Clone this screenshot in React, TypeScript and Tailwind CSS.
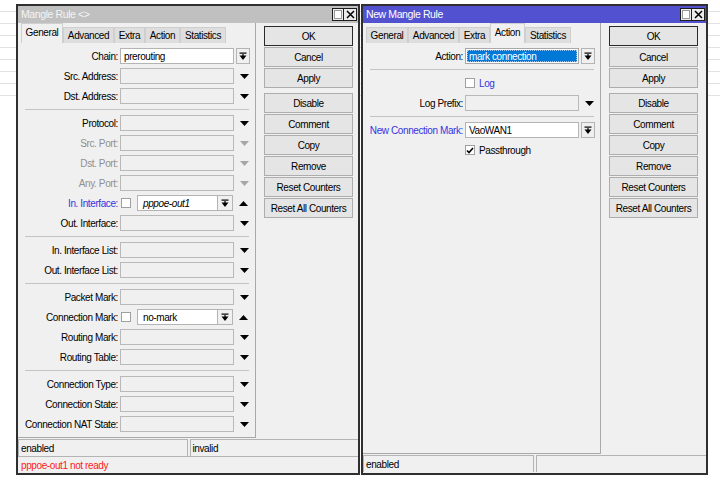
import React from "react";

type Row =
  | { kind: "sep" }
  | { kind: "drop"; label: string; disabled?: boolean }
  | { kind: "combo"; label: string; value: string; blue?: boolean }
  | { kind: "negCombo"; label: string; value: string; blue?: boolean; italic?: boolean }
  | { kind: "select"; label: string; value: string }
  | { kind: "check"; text: string; checked?: boolean; blue?: boolean };

const generalRows: Row[] = [
  { kind: "combo", label: "Chain", value: "prerouting" },
  { kind: "drop", label: "Src. Address" },
  { kind: "drop", label: "Dst. Address" },
  { kind: "sep" },
  { kind: "drop", label: "Protocol" },
  { kind: "drop", label: "Src. Port", disabled: true },
  { kind: "drop", label: "Dst. Port", disabled: true },
  { kind: "drop", label: "Any. Port", disabled: true },
  { kind: "negCombo", label: "In. Interface", value: "pppoe-out1", blue: true, italic: true },
  { kind: "drop", label: "Out. Interface" },
  { kind: "sep" },
  { kind: "drop", label: "In. Interface List" },
  { kind: "drop", label: "Out. Interface List" },
  { kind: "sep" },
  { kind: "drop", label: "Packet Mark" },
  { kind: "negCombo", label: "Connection Mark", value: "no-mark" },
  { kind: "drop", label: "Routing Mark" },
  { kind: "drop", label: "Routing Table" },
  { kind: "sep" },
  { kind: "drop", label: "Connection Type" },
  { kind: "drop", label: "Connection State" },
  { kind: "drop", label: "Connection NAT State" },
];

const actionRows: Row[] = [
  { kind: "select", label: "Action", value: "mark connection" },
  { kind: "sep" },
  { kind: "check", text: "Log", blue: true },
  { kind: "drop", label: "Log Prefix" },
  { kind: "sep" },
  { kind: "combo", label: "New Connection Mark", value: "VaoWAN1", blue: true },
  { kind: "check", text: "Passthrough", checked: true },
];

const tabs = [
  { name: "General", w: "w-[42px]" },
  { name: "Advanced", w: "w-[51px]" },
  { name: "Extra", w: "w-[31px]" },
  { name: "Action", w: "w-[35px]" },
  { name: "Statistics", w: "w-[46px]" },
];

const buttons = ["OK", "Cancel", "Apply", "Disable", "Comment", "Copy", "Remove", "Reset Counters", "Reset All Counters"];

function DownTri({ grey }: { grey?: boolean }) {
  return (
    <svg width="9" height="5" viewBox="0 0 9 5">
      <polygon points="0,0 9,0 4.5,5" fill={grey ? "#a6a6a6" : "#000"} />
    </svg>
  );
}

function UpTri() {
  return (
    <svg width="9" height="5" viewBox="0 0 9 5">
      <polygon points="0,5 9,5 4.5,0" fill="#000" />
    </svg>
  );
}

function ComboIcon() {
  return (
    <svg width="8" height="9" viewBox="0 0 8 9">
      <rect x="0.5" y="0.5" width="7" height="1.2" fill="#000" />
      <polygon points="0.5,3.5 7.5,3.5 4,8" fill="#000" />
      <rect x="3.4" y="2" width="1.2" height="3" fill="#000" />
    </svg>
  );
}

function Label({ text, disabled, blue }: { text: string; disabled?: boolean; blue?: boolean }) {
  const color = disabled ? "text-[#8f8f8f]" : blue ? "text-[#3434e0]" : "text-black";
  return <div className={`w-[100px] shrink-0 whitespace-nowrap text-right ${color}`}>{text}:</div>;
}

function ComboButton({ attached }: { attached?: boolean }) {
  return (
    <div
      className={`flex h-[16px] items-center justify-center border border-[#b4b4b4] bg-[#f0f0f0] ${
        attached ? "w-[15px] border-l-0" : "ml-[2px] w-[14px]"
      }`}
    >
      <ComboIcon />
    </div>
  );
}

function FormRow({ row }: { row: Row }) {
  if (row.kind === "sep") {
    return (
      <div className="flex h-[7px] items-center pl-[7px] pr-[6px]">
        <div className="h-px flex-1 bg-[#c4c4c4]" />
      </div>
    );
  }
  if (row.kind === "check") {
    return (
      <div className="flex h-[20px] items-center">
        <div className="w-[100px] shrink-0" />
        <div className="ml-[2px] flex h-[10px] w-[10px] items-center justify-center border border-[#a0a0a0] bg-white">
          {row.checked && (
            <svg width="8" height="7" viewBox="0 0 8 7">
              <polyline points="1,3.5 3,5.5 7,1" fill="none" stroke="#000" strokeWidth="1.6" />
            </svg>
          )}
        </div>
        <span className={`ml-[4px] ${row.blue ? "text-[#3434e0]" : "text-black"}`}>{row.text}</span>
      </div>
    );
  }
  return (
    <div className="flex h-[20px] items-center">
      <Label
        text={row.label}
        disabled={row.kind === "drop" && row.disabled}
        blue={(row.kind === "combo" || row.kind === "negCombo") && row.blue}
      />
      <div className="ml-[2px] flex items-center">
        {row.kind === "drop" && (
          <>
            <div className="h-[16px] w-[114px] border border-[#b9b9b9] bg-[#f0f0f0]" />
            <div className="ml-[2px] flex w-[16px] justify-center">
              <DownTri grey={row.disabled} />
            </div>
          </>
        )}
        {row.kind === "combo" && (
          <>
            <div className="flex h-[16px] w-[114px] items-center border border-[#b4b4b4] bg-white pl-[3px]">
              {row.value}
            </div>
            <ComboButton />
          </>
        )}
        {row.kind === "select" && (
          <>
            <div className="flex h-[16px] w-[114px] border border-[#a8a8a8] bg-white p-px">
              <div className="flex flex-1 items-center bg-[#0078d7] pl-[2px] text-white outline-1 -outline-offset-1 outline-dotted outline-[#9cc6ee]">
                {row.value}
              </div>
            </div>
            <ComboButton />
          </>
        )}
        {row.kind === "negCombo" && (
          <>
            <div className="ml-px h-[10px] w-[10px] border border-[#a0a0a0] bg-white" />
            <div
              className={`ml-[6px] flex h-[16px] w-[81px] items-center border border-[#b4b4b4] bg-white pl-[5px] ${
                row.italic ? "italic" : ""
              }`}
            >
              {row.value}
            </div>
            <ComboButton attached />
            <div className="ml-[2px] flex w-[16px] justify-center">
              <UpTri />
            </div>
          </>
        )}
      </div>
    </div>
  );
}

function Window({
  title,
  active,
  selectedTab,
  rows,
  status,
  error,
  pos,
}: {
  title: string;
  active?: boolean;
  selectedTab: string;
  rows: Row[];
  status: [string, string];
  error?: string;
  pos: string;
}) {
  return (
    <div className={`absolute top-[4px] flex h-[471px] flex-col border-2 border-[#2f2f2f] bg-[#f0f0f0] ${pos}`}>
      {/* title bar */}
      <div
        className={`flex h-[17px] shrink-0 items-center justify-between pl-[3px] pr-px ${
          active ? "bg-[#5252d0] text-white" : "bg-[#c0c0c0] text-[#f4f4f4]"
        }`}
      >
        <span className="text-[10.5px]">{title}</span>
        <div className="flex">
          <div className="flex h-[13px] w-[12px] items-center justify-center border border-[#1e1e1e] bg-[#ececec]">
            <div className="h-[9px] w-[8px] border border-[#9a9a9a] bg-white" />
          </div>
          <div className="flex h-[13px] w-[13px] items-center justify-center border border-l-0 border-[#1e1e1e] bg-[#ececec]">
            <svg width="9" height="9" viewBox="0 0 9 9">
              <path d="M1 1 L8 8 M8 1 L1 8" stroke="#000" strokeWidth="1.5" />
            </svg>
          </div>
        </div>
      </div>

      {/* body */}
      <div className="flex min-h-0 flex-1">
        <div className="flex w-[238px] shrink-0 flex-col border-r border-b border-[#a9a9a9]">
          <div className="flex h-[20px] shrink-0 items-end pl-[3px]">
            {tabs.map((t) => {
              const sel = t.name === selectedTab;
              return (
                <div
                  key={t.name}
                  className={`flex items-center justify-center whitespace-nowrap border border-b-0 border-[#cfcfcf] ${t.w} ${
                    sel ? "h-[20px] bg-[#f0f0f0] pb-[2px]" : "h-[16px] bg-[#dedede]"
                  }`}
                >
                  {t.name}
                </div>
              );
            })}
          </div>
          <div className="flex flex-col pt-[3px]">
            {rows.map((r, i) => (
              <FormRow key={i} row={r} />
            ))}
          </div>
        </div>

        <div className="ml-[8px] flex w-[89px] shrink-0 flex-col gap-px pt-[3px]">
          {buttons.map((b) => (
            <div
              key={b}
              className={`flex h-[20px] items-center justify-center whitespace-nowrap border bg-[#e5e5e5] ${
                b === "OK" ? "border-[#2a2a2a]" : "border-[#adadad]"
              } ${b === "Disable" ? "mt-[4px]" : ""}`}
            >
              {b}
            </div>
          ))}
        </div>
      </div>

      {/* status bar */}
      <div className={`flex shrink-0 flex-col pt-px ${error ? "h-[35px]" : "h-[19px]"}`}>
        <div className="flex h-[17px] gap-[2px]">
          <div className="flex flex-1 items-center border-t border-l border-r border-[#b4b4b4] pl-[2px]">{status[0]}</div>
          <div className="flex flex-1 items-center border-t border-l border-[#b4b4b4] pl-[2px]">{status[1]}</div>
        </div>
        {error && (
          <div className="flex h-[17px] items-center border-t border-[#b4b4b4] pl-[3px] text-[#ff1a1a]">{error}</div>
        )}
      </div>
    </div>
  );
}

export default function App() {
  return (
    <div className="relative h-[488px] w-[720px] overflow-hidden bg-white font-['Liberation_Sans',Arial,sans-serif] text-[10px] tracking-[-0.4px] text-black">
      <div className="flex flex-col">
        {Array.from({ length: 8 }).map((_, i) => (
          <div key={i} className="h-[12px] border-b border-[#e2e2e2]" />
        ))}
      </div>

      <Window
        pos="left-[16px] w-[344px]"
        title="Mangle Rule <>"
        selectedTab="General"
        rows={generalRows}
        status={["enabled", "invalid"]}
        error="pppoe-out1 not ready"
      />
      <Window
        pos="left-[361px] w-[347px]"
        title="New Mangle Rule"
        active
        selectedTab="Action"
        rows={actionRows}
        status={["enabled", ""]}
      />
    </div>
  );
}
